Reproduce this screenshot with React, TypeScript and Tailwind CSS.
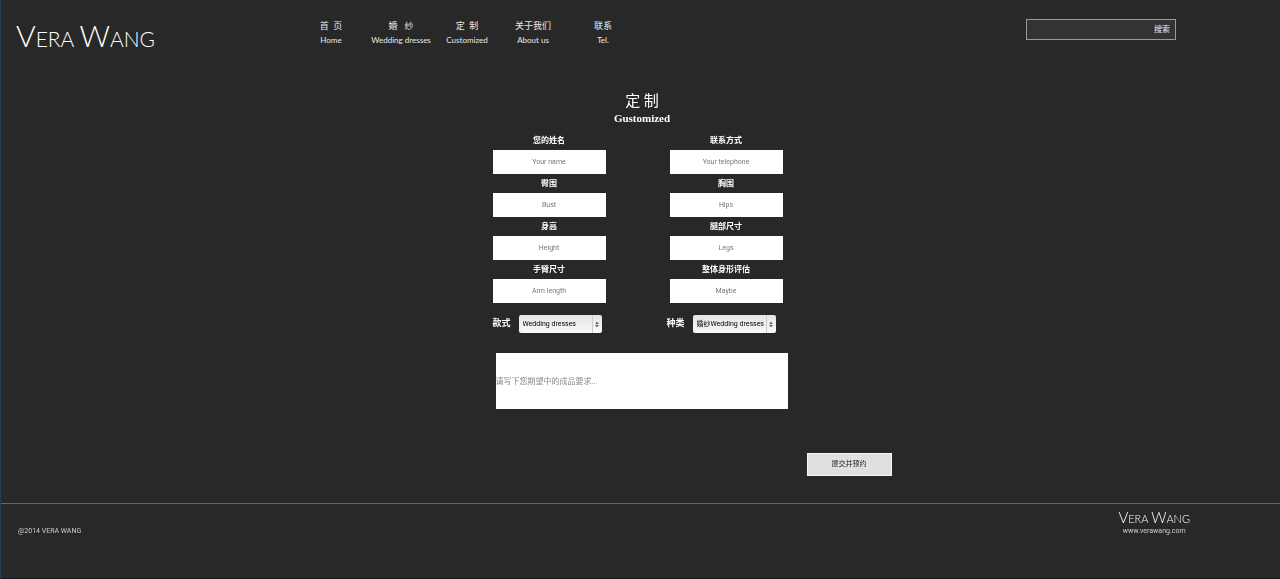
import { ChevronDown, ChevronUp } from 'lucide-react';

const navItems = [
  { zh: '首  页', en: 'Home' },
  { zh: '婚   纱', en: 'Wedding dresses' },
  { zh: '定  制', en: 'Customized' },
  { zh: '关于我们', en: 'About us' },
  { zh: '联系', en: 'Tel.' },
];

const fields = [
  { id: 'name', label: '您的姓名', placeholder: 'Your name' },
  { id: 'telephone', label: '联系方式', placeholder: 'Your telephone' },
  { id: 'bust', label: '臀围', placeholder: 'Bust' },
  { id: 'hips', label: '胸围', placeholder: 'Hips' },
  { id: 'height', label: '身高', placeholder: 'Height' },
  { id: 'legs', label: '腿部尺寸', placeholder: 'Legs' },
  { id: 'arm', label: '手臂尺寸', placeholder: 'Arm length' },
  { id: 'shape', label: '整体身形评估', placeholder: 'Maybe' },
];

const selects = [
  { id: 'style', label: '款式', option: 'Wedding dresses' },
  { id: 'kind', label: '种类', option: '婚纱Wedding dresses' },
];

function Logo({ small = false }: { small?: boolean }) {
  const size = small ? 'text-[11px] leading-[14px]' : 'text-[21px] leading-8';
  const cap = small ? 'text-[15px]' : 'text-[30px]';
  return (
    <span className={`block whitespace-nowrap font-['Lato',sans-serif] font-light text-white ${size}`}>
      <span className={cap}>V</span>ERA <span className={cap}>W</span>ANG
    </span>
  );
}

function Field({ id, label, placeholder }: { id: string; label: string; placeholder: string }) {
  return (
    <div className="flex flex-col">
      <label htmlFor={id} className="h-[19px] text-center text-[8px] font-bold leading-[19px] text-white">
        {label}
      </label>
      <input
        id={id}
        placeholder={placeholder}
        className="h-6 w-full bg-white text-center text-[7px] text-black placeholder:text-[#777]"
      />
    </div>
  );
}

function SelectField({ id, label, option }: { id: string; label: string; option: string }) {
  return (
    <div className="flex items-center gap-2">
      <label htmlFor={id} className="text-[9px] font-bold text-white">
        {label}
      </label>
      <div className="relative">
        <select
          id={id}
          className="block h-[18px] w-[83px] appearance-none rounded-xs bg-linear-to-b from-[#e4e4e4] to-[#fafafa] pl-1 text-[7px] text-black"
        >
          <option>{option}</option>
        </select>
        <span className="pointer-events-none absolute inset-y-0 right-0 flex w-[10px] flex-col items-center justify-center border-l border-[#ccc] text-black">
          <ChevronUp className="-mb-px size-1" fill="currentColor" strokeWidth={5} />
          <ChevronDown className="size-1" fill="currentColor" strokeWidth={5} />
        </span>
      </div>
    </div>
  );
}

export default function App() {
  return (
    <div
      lang="zh-CN"
      className="flex min-h-screen flex-col border-b border-l border-b-[#1a1a1a] border-l-[#23405c] bg-[#282828] font-['Roboto','Noto_Sans_CJK_SC',sans-serif] text-white"
    >
      <header className="flex items-start pl-[15px] pr-[104px] pt-[19px]">
        <h1 className="w-[280px] shrink-0">
          <Logo />
        </h1>
        <nav className="grid grid-cols-[70px_70px_62px_70px_70px] text-center font-['Lato','Noto_Sans_CJK_SC',sans-serif]">
          {navItems.map((item) => (
            <a key={item.en} href="#" className="flex flex-col whitespace-pre text-[#e8e8e8]">
              <span className="text-[9px] leading-[14px]">{item.zh}</span>
              <span className="text-[8px] leading-[14px]">{item.en}</span>
            </a>
          ))}
        </nav>
        <form className="ml-auto flex h-[21px] w-[150px] border border-[#999] bg-[#333]">
          <input aria-label="搜索" className="min-w-0 flex-1 bg-transparent px-1 text-[8px]" />
          <button type="button" className="px-[5px] text-[8px] text-[#eee]">
            搜索
          </button>
        </form>
      </header>

      <main className="pt-9">
        <h2 className="flex flex-col items-center pl-[3px]">
          <span className="text-[15px] leading-5">定 制</span>
          <span className="font-['Liberation_Serif',serif] text-[11px] font-bold leading-[14px]">Gustomized</span>
        </h2>
        <form>
          <div className="mx-auto mt-[6px] w-[296px]">
            <div className="grid grid-cols-[113px_113px] gap-x-16">
              {fields.map((field) => (
                <Field key={field.id} {...field} />
              ))}
            </div>
            <div className="mt-3 grid grid-cols-[109px_109px] gap-x-[65px]">
              {selects.map((select) => (
                <SelectField key={select.id} {...select} />
              ))}
            </div>
            <textarea
              aria-label="成品要求"
              placeholder="请写下您期望中的成品要求..."
              className="ml-[3px] mt-5 block h-14 w-[292px] resize-none bg-white py-[23px] text-[8px] leading-3 text-black placeholder:text-[#888]"
            />
          </div>
          <div className="mx-auto mt-11 flex w-[502px] justify-end">
            <button
              type="button"
              className="h-[23px] w-[85px] border border-[#f4f4f4] bg-[#e0e0e0] text-[7px] text-[#222]"
            >
              提交并预约
            </button>
          </div>
        </form>
      </main>

      <footer className="mt-[27px] flex justify-between border-t border-[#666] pl-[17px] pr-[90px] pt-[6px]">
        <p className="pt-4 text-[7px] leading-[10px] text-[#ccc]">@2014 VERA WANG</p>
        <div className="flex flex-col items-center">
          <Logo small />
          <a href="#" className="text-[7px] leading-[10px] text-[#ccc]">
            www.verawang.com
          </a>
        </div>
      </footer>
    </div>
  );
}
